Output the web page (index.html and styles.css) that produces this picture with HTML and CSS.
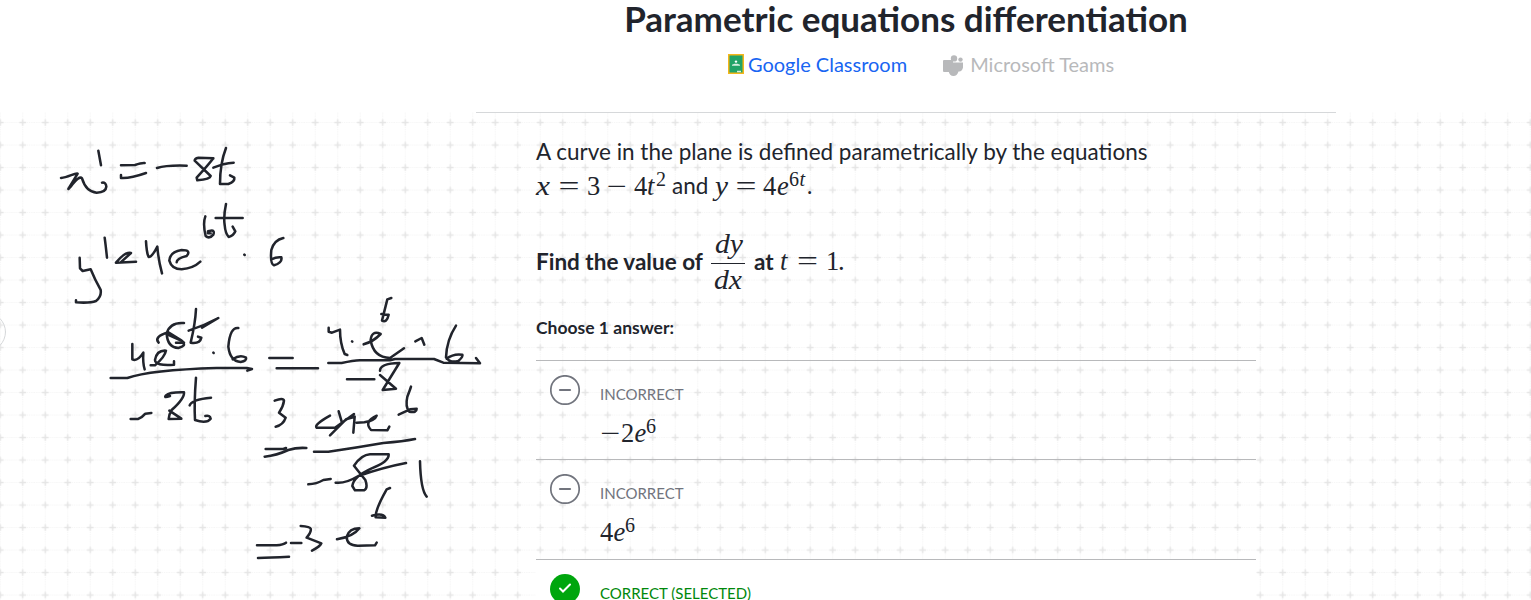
FILE: index.html
```html
<!DOCTYPE html>
<html lang="en">
<head>
<meta charset="utf-8">
<title>Parametric equations differentiation</title>
<link rel="stylesheet" href="styles.css">
</head>
<body>
<header class="header">
  <h1 class="title">Parametric equations differentiation</h1>
  <div class="share">
    <a class="classroom"><svg class="gc" width="16" height="20" viewBox="0 0 16 20"><path fill="#f4b61a" d="M0 0h16v20H0z"/><path fill="#21a366" d="M1.500 1.500h13v17h-13z"/><circle cx="8" cy="7.600" r="1.200" fill="#fff"/><path d="M4 11.800v-1l2.500-1h3l2.500 1v1z" fill="#d5efdf"/><path d="M9 17.500h4" stroke="#d5efdf" stroke-width="1.500"/></svg>Google Classroom</a>
    <a class="teams"><svg class="ms" width="24" height="22" viewBox="0 0 24 22"><g fill="#b8b9bb"><path d="M1 5h9v12H1q-1 0-1-1V6q0-1 1-1z"/><circle cx="11" cy="3.400" r="3.200"/><circle cx="17.500" cy="4.600" r="2.200"/><path d="M9 7.500h11v5q-1 4.500-4.500 4-1.500 4.500-5 4.500-4 0-5-5z"/></g></svg>Microsoft Teams</a>
  </div>
</header>
<main class="board">
  <svg class="grid" width="1531" height="488"><defs><pattern id="dots" width="22.5" height="22.500" patternUnits="userSpaceOnUse" x="11.500" y="-0.700"><path d="M11.250 0v22.500M0 11.250h22.500" stroke="#f5f5f5" stroke-dasharray="1.200 1"/><path d="M11.250 8v6.500M8 11.250h6.500" stroke="#e5e5e5" stroke-width="1.500"/></pattern></defs><rect width="1531" height="488" fill="url(#dots)"/></svg>
  <section class="exercise">
    <div class="question">
      <p class="para">A curve in the plane is defined parametrically by the equations</p>
      <p class="para second"><svg class="math" width="131" height="34"><text class="v" x="0" y="26" textLength="14" lengthAdjust="spacingAndGlyphs">x</text><text x="22.500" y="26" textLength="21" lengthAdjust="spacingAndGlyphs">=</text><text x="51" y="26">3</text><text x="71" y="26" textLength="20" lengthAdjust="spacingAndGlyphs">−</text><text y="26"><tspan x="98">4</tspan><tspan class="v" x="111">t</tspan><tspan class="s" x="120" y="17">2</tspan></text></svg><span class="and">and</span><svg class="math" width="94" height="34"><text class="v" x="1" y="26" textLength="13" lengthAdjust="spacingAndGlyphs">y</text><text x="21.500" y="26" textLength="21" lengthAdjust="spacingAndGlyphs">=</text><text y="26"><tspan x="49">4</tspan><tspan class="v" x="63">e</tspan><tspan class="s" x="75" y="17">6</tspan><tspan class="s v" x="85.500" y="17">t</tspan></text></svg><span class="dot">.</span></p>
      <p class="find"><span class="findtext">Find the value of</span><svg class="frac" width="34" height="64"><text class="v" x="4" y="23" textLength="28" lengthAdjust="spacingAndGlyphs">dy</text><text class="v" x="3" y="59" textLength="28" lengthAdjust="spacingAndGlyphs">dx</text><path d="M0 33.500h34" stroke="#21242c"/></svg><span class="at">at</span><svg class="math" width="70" height="34"><text class="v" x="0" y="25">t</text><text x="17" y="25" textLength="21" lengthAdjust="spacingAndGlyphs">=</text><text x="46" y="25">1</text><text x="58" y="25">.</text></svg></p>
      <p class="choose">Choose 1 answer:</p>
    </div>
    <ul class="answers">
      <li class="answer"><svg class="mark" width="30" height="30"><circle cx="15" cy="15" r="14.200" fill="#fff" stroke="#71747d" stroke-width="1.700"/><path d="M10 15h10" stroke="#71747d" stroke-width="2.200" stroke-linecap="round"/></svg><div><div class="label">INCORRECT</div><svg class="expr" width="70" height="34"><text x="0.500" y="26" textLength="20" lengthAdjust="spacingAndGlyphs">−</text><text y="26"><tspan x="21">2</tspan><tspan class="v" x="34.500">e</tspan><tspan class="s" x="46" y="17">6</tspan></text></svg></div></li>
      <li class="answer"><svg class="mark" width="30" height="30"><circle cx="15" cy="15" r="14.200" fill="#fff" stroke="#71747d" stroke-width="1.700"/><path d="M10 15h10" stroke="#71747d" stroke-width="2.200" stroke-linecap="round"/></svg><div><div class="label">INCORRECT</div><svg class="expr" width="70" height="34"><text y="26"><tspan x="0">4</tspan><tspan class="v" x="13.500">e</tspan><tspan class="s" x="25" y="17">6</tspan></text></svg></div></li>
      <li class="answer correct"><svg class="mark" width="30" height="30"><circle cx="15" cy="15" r="15" fill="#00a60e"/><path d="M10 14.500l3 3 7-7" fill="none" stroke="#fff" stroke-width="2" stroke-linecap="round"/></svg><div><div class="label">CORRECT (SELECTED)</div></div></li>
    </ul>
  </section>
</main>
<svg class="ink" width="1531" height="600">
  <g transform="translate(0 110) scale(.33333)">
    <path d="M183 204C205 202 225 188 233 191L205 237L212 230Q238 195 246 205Q258 245 290 248Q318 247 319 230Q318 216 306 218M295 122L303 166M363 166L405 165Q425 158 434 159M363 195V204Q390 206 438 189M471 174Q500 165 560 167M640 145L595 143Q584 145 584 152L632 198Q630 208 592 211L590 203Q625 165 640 145M678 114Q660 160 660 222L685 222Q705 215 703 203L690 196M640 173Q670 160 701 158"/>
    <path d="M616 319Q608 340 617 378Q628 388 640 374Q645 360 632 362L624 364V370H632M678 282Q670 320 674 345Q676 370 686 381Q700 378 706 364L698 350M647 324H728M314 383Q317 405 321 443M348 458Q375 425 393 429L362 457M348 458L408 455M438 394Q440 430 446 441Q456 442 472 410Q475 450 486 490M530 457Q530 445 560 438Q575 420 545 420Q510 425 508 452Q515 478 545 478Q580 475 601 455M239 443L240 475L248 483L272 478Q285 510 302 540Q305 560 288 573Q270 580 228 577V571M733 434l1 1"/>
    <path d="M850 384Q822 390 814 420Q810 462 822 466Q848 458 844 442Q830 440 814 448"/>
  </g>
  <g transform="translate(40 290) scale(.33333)">
    <path d="M277 162V208Q292 216 310 188Q308 220 314 238M332 226H345Q375 200 378 182Q350 180 345 210Q345 228 402 224V214M356 158Q340 140 385 127L425 152L432 158H408M432 99Q390 96 380 130Q382 172 415 174Q440 168 428 157M380 132L420 150M468 57Q466 100 452 158Q480 162 484 143L474 140M446 122Q490 108 535 84L486 113M520 188l1 1M595 114Q570 110 565 170Q570 214 602 216Q622 212 618 203Q600 192 578 208M212 264H262Q330 240 530 234H620L636 237L622 242"/>
    <path d="M272 387H294Q305 384 316 371L334 369M390 318Q370 325 378 316Q388 306 432 307Q434 325 395 360Q386 375 386 387L424 386L388 362M468 263Q462 340 465 390Q500 402 512 386Q510 375 496 378M449 346Q455 328 513 323"/>
  </g>
  <g transform="translate(250 280) scale(.33333)">
    <path d="M236 143V155L246 158L270 149Q270 190 284 222L292 225M306 184l1 1M341 193Q370 185 392 162Q365 150 362 180Q370 232 420 234L462 205M424 54L412 58L396 122Q410 130 416 104L394 102M496 184L515 174L523 194M618 137Q590 180 588 232Q600 250 625 243Q640 230 637 224Q610 220 590 236M58 234H128M80 265H204M235 249H275Q310 242 330 241H420L435 237H552L580 248L690 250L678 234M291 298H373M390 272Q390 250 448 249L398 330L438 326L390 285"/>
    <path d="M74 362Q100 352 102 362Q100 380 87 398L107 413Q100 435 77 440M240 407Q190 435 200 443H255L312 402M266 394L275 425M240 466L288 418L314 410L310 458M320 428L343 427Q375 422 380 407Q340 425 363 450L412 451L418 440M483 320Q480 330 472 350Q465 380 478 395Q500 400 500 386L480 388L446 404"/>
  </g>
  <g transform="translate(240 380) scale(.33333)">
    <path d="M77 207L130 207L138 204M74 230Q110 226 145 210Q170 202 199 204M222 215H265Q350 203 430 189Q490 184 525 177M205 313Q230 312 250 300L272 297M287 308Q315 312 355 288Q430 262 498 249M342 257Q365 224 390 223H446Q448 245 395 265Q340 290 337 318L345 331H372Q385 325 376 300L342 257M540 244Q542 330 560 350M450 324L440 328Q405 390 407 412L436 413Q430 398 396 407M51 496H110Q130 494 138 488M153 489H184M54 534Q90 533 147 530M182 438Q210 440 212 446Q215 455 200 473L244 490Q240 500 216 512M291 478Q340 470 358 445Q328 445 320 470Q320 498 355 497L405 496L410 488"/>
  </g>
  <circle cx="-14" cy="332" r="19.500" class="edge"/>
</svg>
</body>
</html>
```
FILE: styles.css
```css
body { margin: 0; height: 600px; overflow: hidden; position: relative; background: #fff; color: #21242c; font-family: Lato, "Noto Sans", sans-serif; }
p, h1, ul { margin: 0; padding: 0; }
.header { height: 112px; display: flex; flex-direction: column; align-items: center; padding-left: 281px; }
.title { font-size: 35px; line-height: 36px; font-weight: 700; white-space: nowrap; }
.share { display: flex; gap: 36px; margin-top: 14px; padding-left: 30px; font-size: 20px; line-height: 26px; }
.share a { display: flex; align-items: center; white-space: nowrap; }
.gc { margin-right: 4px; }
.ms { margin-right: 3px; margin-top: 5px; }
.classroom { color: #1865f2; }
.teams { color: #b8b9bb; }
.board { position: relative; height: 488px; overflow: hidden; }
.grid { position: absolute; left: 0; top: 0; }
.exercise { position: relative; width: 860px; margin-left: 476px; border-top: 1px solid #d6d8da; box-sizing: border-box; }
.question { padding: 22px 60px 0; height: 247px; box-sizing: border-box; }
.para { font-size: 22.500px; line-height: 34px; white-space: nowrap; }
.second, .find { display: flex; }
.math, .frac, .expr { flex: none; display: block; overflow: visible; fill: #21242c; font: 26.500px "Liberation Serif", serif; }
.v { font-style: italic; }
.s { font-size: 20px; }
.and { width: 42px; margin-left: 5px; }
.dot { margin-left: -1px; }
.find { height: 64px; margin-top: 27px; align-items: center; font-size: 22.500px; font-weight: 700; }
.findtext { width: 175px; white-space: nowrap; }
.at { width: 26px; margin-left: 9px; }
.findtext, .at { margin-top: -2px; }
.choose { font-size: 17.500px; line-height: 24px; font-weight: 700; margin-top: 22px; }
.answers { list-style: none; margin: 0 80px 0 60px; }
.answer { display: flex; box-sizing: border-box; height: 99.400px; border-top: 1px solid #b8b9bb; padding: 14px; gap: 20px; }
.correct { background: #fff; }
.label { font-size: 15px; line-height: 20px; margin-top: 9px; color: #71747d; }
.correct .label { color: #00880b; }
.expr { margin-top: 12px; }
.ink { position: absolute; left: 0; top: 0; fill: none; stroke: #21242c; stroke-width: 7.600; stroke-linecap: round; stroke-linejoin: round; pointer-events: none; }
.edge { stroke: #d6d8da; stroke-width: 1; }
```
